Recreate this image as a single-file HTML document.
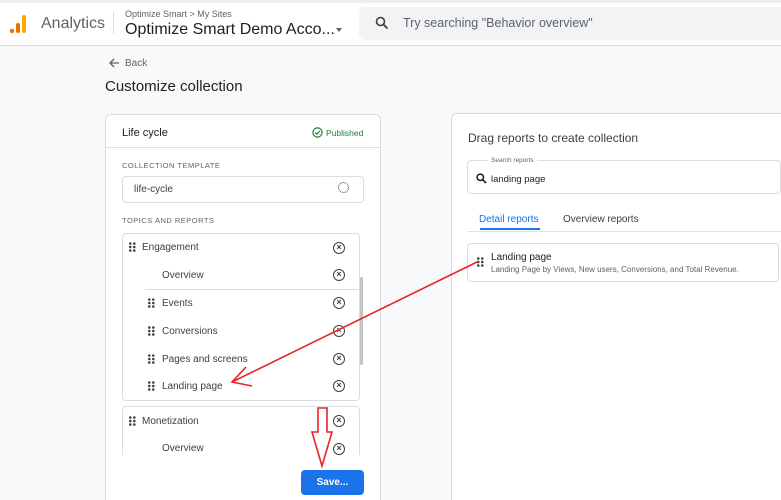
<!DOCTYPE html><html><head><style>
*{box-sizing:border-box;margin:0;padding:0}
html,body{width:781px;height:500px;overflow:hidden}
body{background:#f8f9fa;font-family:"Liberation Sans",sans-serif;color:#202124;position:relative}
.abs{position:absolute}
.hdr{left:0;top:3px;width:781px;height:43px;background:#fff;border-bottom:1px solid #dadce0}
.card{background:#fff;border:1px solid #dadce0;border-bottom:none;border-radius:6px 6px 0 0}
.x{position:absolute;left:333px;width:12px;height:12px;border:1.5px solid #3c4043;border-radius:50%;font-size:9px;line-height:9px;text-align:center;color:#3c4043;font-weight:bold}
.dr{position:absolute;width:7px;height:11px}
.it{position:absolute;font-size:10px;color:#3c4043}
</style></head><body>
<svg width="0" height="0" style="position:absolute"><defs><g id="d"><circle cx="1.3" cy="1.5" r="1.3"/><circle cx="5.3" cy="1.5" r="1.3"/><circle cx="1.3" cy="5" r="1.3"/><circle cx="5.3" cy="5" r="1.3"/><circle cx="1.3" cy="8.5" r="1.3"/><circle cx="5.3" cy="8.5" r="1.3"/></g></defs></svg>
<div class="abs" style="left:0;top:0;width:781px;height:3px;background:#eceff1"></div>
<div class="abs hdr"></div>
<svg class="abs" style="left:9px;top:13px" width="20" height="22"><circle cx="3" cy="18" r="2.2" fill="#e37400"/><rect x="7" y="10" width="4" height="10" rx="2" fill="#e37400"/><rect x="13" y="2" width="4" height="18" rx="2" fill="#f9ab00"/></svg>
<div class="abs" style="left:41px;top:15px;font-size:16px;color:#5f6368">Analytics</div>
<div class="abs" style="left:113px;top:12px;width:1px;height:22px;background:#dadce0"></div>
<div class="abs" style="left:125px;top:9px;font-size:9px;color:#5f6368">Optimize Smart &gt; My Sites</div>
<div class="abs" style="left:125px;top:21px;font-size:16px;color:#202124">Optimize Smart Demo Acco...</div>
<div class="abs" style="left:336px;top:28px;border:3px solid transparent;border-top:4px solid #5f6368"></div>
<div class="abs" style="left:359px;top:7px;width:422px;height:33px;background:#f1f3f4;border-radius:6px 0 0 6px"></div>
<svg class="abs" style="left:375px;top:16px" width="14" height="14"><circle cx="5.5" cy="5.5" r="4" stroke="#3c4043" stroke-width="1.6" fill="none"/><line x1="8.5" y1="8.5" x2="12.5" y2="12.5" stroke="#3c4043" stroke-width="1.8"/></svg>
<div class="abs" style="left:403px;top:16px;font-size:12.5px;color:#5f6368">Try searching "Behavior overview"</div>
<svg class="abs" style="left:108px;top:58px" width="12" height="10"><path d="M11 5H2M6 1L2 5L6 9" stroke="#5f6368" stroke-width="1.3" fill="none"/></svg>
<div class="abs" style="left:125px;top:58px;font-size:10px;color:#5f6368">Back</div>
<div class="abs" style="left:105px;top:78px;font-size:15px">Customize collection</div>

<div class="abs card" style="left:105px;top:114px;width:276px;height:386px"></div>
<div class="abs" style="left:105px;top:147px;width:276px;height:1px;background:#e0e0e0"></div>
<div class="abs" style="left:122px;top:127px;font-size:11px">Life cycle</div>
<svg class="abs" style="left:312px;top:127px" width="11" height="11"><circle cx="5.5" cy="5.5" r="4.6" stroke="#188038" stroke-width="1.2" fill="none"/><path d="M3.2 5.6L4.8 7.2L7.8 4" stroke="#188038" stroke-width="1.2" fill="none"/></svg>
<div class="abs" style="left:326px;top:128px;font-size:8.5px;color:#188038">Published</div>
<div class="abs" style="left:122px;top:161px;font-size:7.5px;color:#5f6368;letter-spacing:.5px">COLLECTION TEMPLATE</div>
<div class="abs" style="left:122px;top:176px;width:242px;height:27px;border:1px solid #dadce0;border-radius:4px"></div>
<div class="abs" style="left:134px;top:184px;font-size:10px;color:#3c4043">life-cycle</div>
<div class="abs" style="left:338px;top:182px;width:11px;height:11px;border:1.3px dotted #3c4043;border-radius:50%"></div>
<div class="abs" style="left:122px;top:216px;font-size:7.5px;color:#5f6368;letter-spacing:.5px">TOPICS AND REPORTS</div>
<div class="abs" style="left:122px;top:233px;width:238px;height:168px;border:1px solid #dadce0;border-radius:4px"></div>
<div class="abs" style="left:145px;top:289px;width:214px;height:1px;background:#dadce0"></div>
<div class="abs" style="left:360px;top:277px;width:3px;height:88px;background:#c4c4c4;border-radius:2px"></div>
<div class="abs" style="left:122px;top:406px;width:238px;height:49px;border:1px solid #dadce0;border-bottom:none;border-radius:4px 4px 0 0"></div>

<svg class="dr" style="left:129px;top:242px"><use href="#d" fill="#3c4043"/></svg><div class="it" style="left:142px;top:242px">Engagement</div><div class="x" style="top:242px">×</div>
<div class="it" style="left:162px;top:270px">Overview</div><div class="x" style="top:269px">×</div>
<svg class="dr" style="left:148px;top:298px"><use href="#d" fill="#3c4043"/></svg><div class="it" style="left:162px;top:298px">Events</div><div class="x" style="top:297px">×</div>
<svg class="dr" style="left:148px;top:326px"><use href="#d" fill="#3c4043"/></svg><div class="it" style="left:162px;top:326px">Conversions</div><div class="x" style="top:325px">×</div>
<svg class="dr" style="left:148px;top:354px"><use href="#d" fill="#3c4043"/></svg><div class="it" style="left:162px;top:354px">Pages and screens</div><div class="x" style="top:353px">×</div>
<svg class="dr" style="left:148px;top:381px"><use href="#d" fill="#3c4043"/></svg><div class="it" style="left:162px;top:381px">Landing page</div><div class="x" style="top:380px">×</div>
<svg class="dr" style="left:129px;top:416px"><use href="#d" fill="#3c4043"/></svg><div class="it" style="left:142px;top:416px">Monetization</div><div class="x" style="top:415px">×</div>
<div class="it" style="left:162px;top:443px">Overview</div><div class="x" style="top:443px">×</div>
<div class="abs" style="left:301px;top:470px;width:63px;height:25px;background:#1a73e8;border-radius:4px;color:#fff;font-size:10px;font-weight:bold;text-align:center;line-height:25px">Save...</div>

<div class="abs card" style="left:451px;top:113px;width:340px;height:387px"></div>
<div class="abs" style="left:468px;top:131px;font-size:12px;color:#3c4043">Drag reports to create collection</div>
<div class="abs" style="left:467px;top:160px;width:314px;height:34px;border:1px solid #dadce0;border-radius:4px"></div>
<div class="abs" style="left:488px;top:157px;font-size:6.5px;color:#5f6368;background:#fff;padding:0 3px">Search reports</div>
<svg class="abs" style="left:476px;top:173px" width="11" height="11"><circle cx="4.3" cy="4.3" r="3.2" stroke="#202124" stroke-width="1.5" fill="none"/><line x1="6.8" y1="6.8" x2="10" y2="10" stroke="#202124" stroke-width="1.7"/></svg>
<div class="abs" style="left:491px;top:174px;font-size:9.5px">landing page</div>
<div class="abs" style="left:479px;top:214px;font-size:10px;color:#1a73e8">Detail reports</div>
<div class="abs" style="left:480px;top:228px;width:60px;height:2px;background:#1a73e8"></div>
<div class="abs" style="left:563px;top:214px;font-size:10px;color:#3c4043">Overview reports</div>
<div class="abs" style="left:467px;top:231px;width:314px;height:1px;background:#e0e0e0"></div>
<div class="abs" style="left:467px;top:243px;width:312px;height:39px;border:1px solid #dadce0;border-radius:4px"></div>
<svg class="dr" style="left:477px;top:257px"><use href="#d" fill="#3c4043"/></svg>
<div class="abs" style="left:491px;top:252px;font-size:10px">Landing page</div>
<div class="abs" style="left:491px;top:265px;font-size:8px;color:#5f6368">Landing Page by Views, New users, Conversions, and Total Revenue.</div>

<svg class="abs" style="left:0;top:0" width="781" height="500">
<line x1="477" y1="262" x2="232" y2="382" stroke="#e8222a" stroke-width="1.6"/>
<polyline points="246,367 232,382 252,386" fill="none" stroke="#e8222a" stroke-width="1.6"/>
<path d="M318 408 H327 V432 H332 L322 466 L312 432 H318 Z" fill="none" stroke="#e8222a" stroke-width="1.6"/>
</svg>
</body></html>
